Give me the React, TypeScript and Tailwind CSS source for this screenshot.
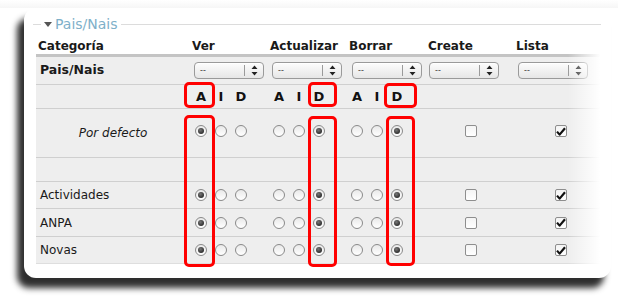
import React from "react";

type Mark = "A" | "I" | "D";

const font = "font-['DejaVu_Sans',Verdana,sans-serif]";

const Radio: React.FC<{ on?: boolean }> = ({ on }) => (
  <span className="w-[12px] h-[12px] rounded-full border border-[#8a8a8a] bg-[linear-gradient(#e9e9e9,#ffffff)] flex items-center justify-center shrink-0">
    {on && <span className="w-[6px] h-[6px] rounded-full bg-[radial-gradient(circle_at_40%_35%,#777,#111)]" />}
  </span>
);

const Check: React.FC<{ on?: boolean }> = ({ on }) => (
  <span className="w-[12px] h-[12px] rounded-[2px] border border-[#8e8e8e] bg-[linear-gradient(#f4f4f4,#ffffff)] flex items-center justify-center">
    {on && (
      <svg width="10" height="9" viewBox="0 0 10 9">
        <path d="M1 4.6 L3.6 7.6 L9 1.2" fill="none" stroke="#111" strokeWidth="2.2" strokeLinejoin="round" />
      </svg>
    )}
  </span>
);

const Select: React.FC = () => (
  <div className="w-[70px] h-[17px] rounded-[4px] border border-[#9a9a9a] bg-[linear-gradient(#fdfdfd,#e6e6e6)] flex items-center text-[8px] text-[#333] shadow-[inset_0_1px_0_#fff]">
    <span className="pl-[5px] w-[49px] leading-none">--</span>
    <span className="w-px h-[11px] bg-[#9a9a9a]" />
    <span className="flex-1 flex justify-center">
      <svg width="7" height="11" viewBox="0 0 7 11">
        <path d="M3.5 0.5 L6.5 4 L0.5 4 Z M3.5 10.5 L6.5 7 L0.5 7 Z" fill="#222" />
      </svg>
    </span>
  </div>
);

const Triple: React.FC<{ on: Mark; offset?: string }> = ({ on, offset = "ml-[5px]" }) => (
  <div className={`flex items-center gap-[8px] ${offset}`}>
    <Radio on={on === "A"} />
    <Radio on={on === "I"} />
    <Radio on={on === "D"} />
  </div>
);

const Letters: React.FC<{ offset?: string }> = ({ offset = "ml-[5px]" }) => (
  <div className={`flex items-center gap-[8px] font-bold text-[13px] text-[#111] ${offset}`}>
    <span className="w-[12px] text-center">A</span>
    <span className="w-[12px] text-center">I</span>
    <span className="w-[12px] text-center">D</span>
  </div>
);

const Cells: React.FC<{ create: boolean; lista: boolean }> = ({ create, lista }) => (
  <>
    <div className="w-[78px]"><Triple on="A" /></div>
    <div className="w-[79px]"><Triple on="D" /></div>
    <div className="w-[78px]"><Triple on="D" offset="ml-[4px]" /></div>
    <div className="w-[89px] pl-[40px]"><Check on={create} /></div>
    <div className="flex-1 pl-[41px]"><Check on={lista} /></div>
  </>
);

const rows = [
  { name: "Actividades", h: "h-[27px]", line: "border-[#cfcfcf]" },
  { name: "ANPA", h: "h-[28px]", line: "border-[#cfcfcf]" },
  { name: "Novas", h: "h-[27px]", line: "border-[#dedede]" },
];

const RedBox: React.FC<{ cls: string }> = ({ cls }) => (
  <div className={`absolute border-[3px] border-[#f00] rounded-[5px] ${cls}`} />
);

export default function App() {
  return (
    <div className={`relative w-[618px] h-[303px] bg-white overflow-hidden ${font}`}>
      <div className="absolute left-0 top-0 w-full h-[8px] bg-[linear-gradient(#ffffff,#f6f6f6)]" />
      <div className="ml-[24px] mt-[8px] w-[587px] h-[270px] rounded-[12px] bg-white shadow-[-7px_10px_6px_rgba(0,0,0,0.82)] pt-[8px] pl-[12px]">
        {/* legend */}
        <div className="flex items-center h-[16px] -ml-[3px] pr-[10px]">
          <span className="w-[8px] h-px bg-[#dcdcdc]" />
          <span className="flex items-center gap-[3px] px-[3px] text-[14px] text-[#7eb0c9] leading-none">
            <svg width="8" height="5" viewBox="0 0 8 5"><path d="M0 0 H8 L4 5 Z" fill="#555" /></svg>
            Pais/Nais
          </span>
          <span className="flex-1 h-px bg-[#dcdcdc]" />
        </div>

        <div className="relative w-[569px] text-[12px] text-[#1a1a1a]">
          {/* header */}
          <div className="flex items-center h-[17px] mt-[5px] font-bold border-b-[3px] border-[#c4c4c4] box-content">
            <div className="w-[154px] pl-[2px]">Categoría</div>
            <div className="w-[78px] pl-[2px]">Ver</div>
            <div className="w-[79px] pl-[2px]">Actualizar</div>
            <div className="w-[78px] pl-[2px]">Borrar</div>
            <div className="w-[89px] pl-[3px]">Create</div>
            <div className="flex-1 pl-[2px]">Lista</div>
          </div>

          <div className="bg-[#eeeeee]">
            <div className="flex items-center h-[28px] border-b border-[#cfcfcf]">
              <div className="w-[154px] pl-[4px] font-bold text-[12.5px]">Pais/Nais</div>
              <div className="w-[78px] pl-[4px]"><Select /></div>
              <div className="w-[79px] pl-[4px]"><Select /></div>
              <div className="w-[78px] pl-[5px]"><Select /></div>
              <div className="w-[89px] pl-[4px]"><Select /></div>
              <div className="flex-1 pl-[4px]"><Select /></div>
            </div>

            <div className="flex items-center h-[24px] border-b border-[#cfcfcf]">
              <div className="w-[154px]" />
              <div className="w-[78px]"><Letters /></div>
              <div className="w-[79px]"><Letters /></div>
              <div className="w-[78px]"><Letters offset="ml-[4px]" /></div>
            </div>

            <div className="flex items-start pt-[16px] h-[49px] border-b border-[#cfcfcf]">
              <div className="w-[154px] text-center italic -mt-px">Por defecto</div>
              <Cells create={false} lista={true} />
            </div>

            <div className="h-[24px] border-b border-[#cfcfcf]" />

            {rows.map((r) => (
              <div key={r.name} className={`flex items-center ${r.h} border-b ${r.line}`}>
                <div className="w-[154px] pl-[4px]">{r.name}</div>
                <Cells create={false} lista={true} />
              </div>
            ))}
          </div>
        </div>
      </div>

      {/* right fade */}
      <div className="absolute left-[568px] top-[28px] w-[38px] h-[240px] bg-[linear-gradient(to_right,rgba(255,255,255,0),#fff_85%)]" />

      {/* red highlight boxes */}
      <RedBox cls="left-[184px] top-[82px] w-[31px] h-[26px]" />
      <RedBox cls="left-[184px] top-[115px] w-[31px] h-[152px]" />
      <RedBox cls="left-[308px] top-[82px] w-[29px] h-[25px]" />
      <RedBox cls="left-[308px] top-[116px] w-[29px] h-[151px]" />
      <RedBox cls="left-[384px] top-[83px] w-[33px] h-[25px]" />
      <RedBox cls="left-[386px] top-[116px] w-[29px] h-[150px]" />
    </div>
  );
}
